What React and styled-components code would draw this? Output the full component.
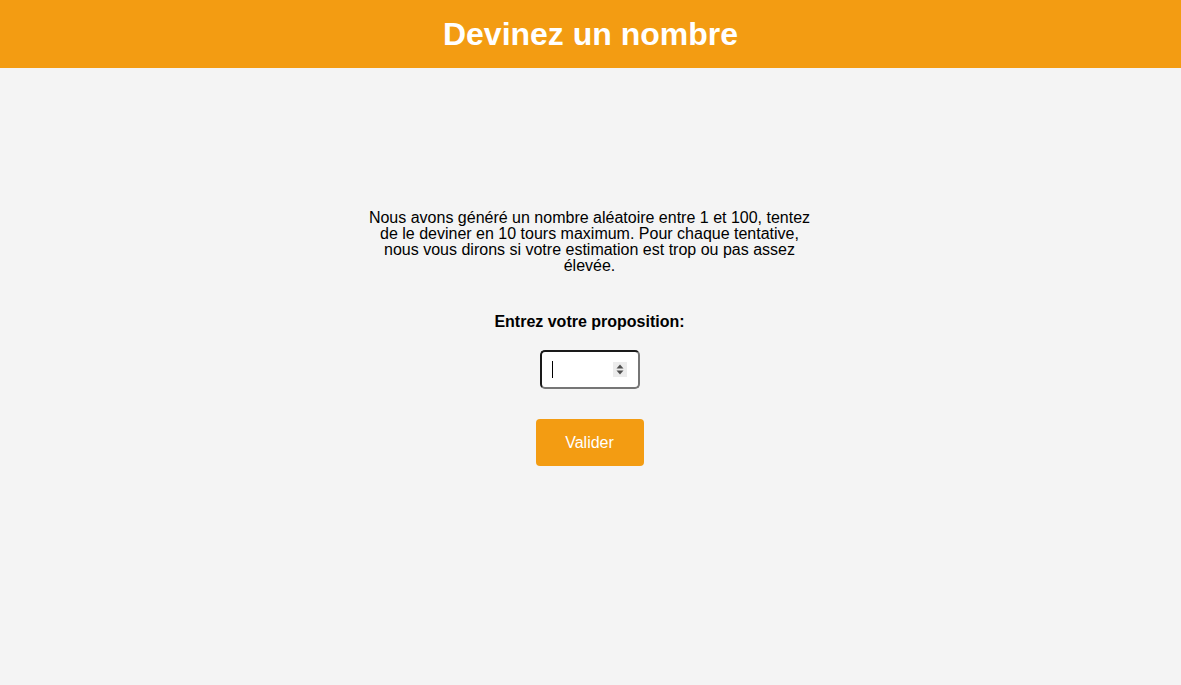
import React from 'react';
import styled, {createGlobalStyle} from 'styled-components';

const GlobalStyle = createGlobalStyle`
  html, body {
    margin: 0;
    padding: 0;
    background-color: #f4f4f4;
    font-family: "Liberation Sans", Arial, sans-serif;
  }
`;

const Header = styled.header`
  height: 68px;
  background-color: #f39c12;
  display: flex;
  justify-content: center;
  align-items: center;
`;

const Title = styled.h1`
  margin: 0;
  color: #fff;
  font-size: 32px;
  font-weight: 700;
`;

const Main = styled.main`
  display: flex;
  flex-direction: column;
  align-items: center;
  padding-top: 142px;
  padding-right: 2px;
`;

const Intro = styled.p`
  width: 452px;
  margin: 0;
  font-size: 16px;
  line-height: 16px;
  text-align: center;
  color: #000;
`;

const Label = styled.label`
  margin-top: 39px;
  font-size: 16px;
  font-weight: 700;
  line-height: 18px;
  color: #000;
`;

const Field = styled.div`
  position: relative;
  margin-top: 19px;
`;

const NumberInput = styled.input`
  box-sizing: border-box;
  display: block;
  width: 100px;
  height: 39px;
  padding: 0 10px;
  font-size: 16px;
  font-family: inherit;
  background: #fff;
  border: 2px solid;
  border-color: #1a1a1a #767676 #767676 #1a1a1a;
  border-radius: 5px;
  outline: none;
  -moz-appearance: textfield;

  &::-webkit-inner-spin-button,
  &::-webkit-outer-spin-button {
    -webkit-appearance: none;
    margin: 0;
  }
`;

const Caret = styled.span`
  position: absolute;
  left: 12px;
  top: 11px;
  width: 1px;
  height: 17px;
  background: #000;
  pointer-events: none;
`;

const Spinner = styled.span`
  position: absolute;
  right: 13px;
  top: 12px;
  width: 14px;
  height: 15px;
  background: #ececec;
  display: flex;
  align-items: center;
  justify-content: center;
  pointer-events: none;
`;

const Button = styled.button`
  margin-top: 30px;
  width: 108px;
  height: 47px;
  border: none;
  border-radius: 4px;
  background-color: #f39c12;
  color: #fff;
  font-size: 16px;
  font-family: inherit;
  cursor: pointer;
`;

export default function App() {
    return (
        <>
            <GlobalStyle/>
            <Header>
                <Title>Devinez un nombre</Title>
            </Header>
            <Main>
                <Intro>
                    Nous avons généré un nombre aléatoire entre 1 et 100, tentez de le deviner en 10 tours
                    maximum. Pour chaque tentative, nous vous dirons si votre estimation est trop ou pas assez
                    élevée.
                </Intro>
                <Label htmlFor="guess">Entrez votre proposition:</Label>
                <Field>
                    <NumberInput id="guess" type="number" min="1" max="100"/>
                    <Caret/>
                    <Spinner>
                        <svg width="8" height="11" viewBox="0 0 8 11">
                            <path d="M4 0.5 L7.5 4.5 H0.5 Z" fill="#505050"/>
                            <path d="M4 10.5 L7.5 6.5 H0.5 Z" fill="#505050"/>
                        </svg>
                    </Spinner>
                </Field>
                <Button>Valider</Button>
            </Main>
        </>
    );
}
